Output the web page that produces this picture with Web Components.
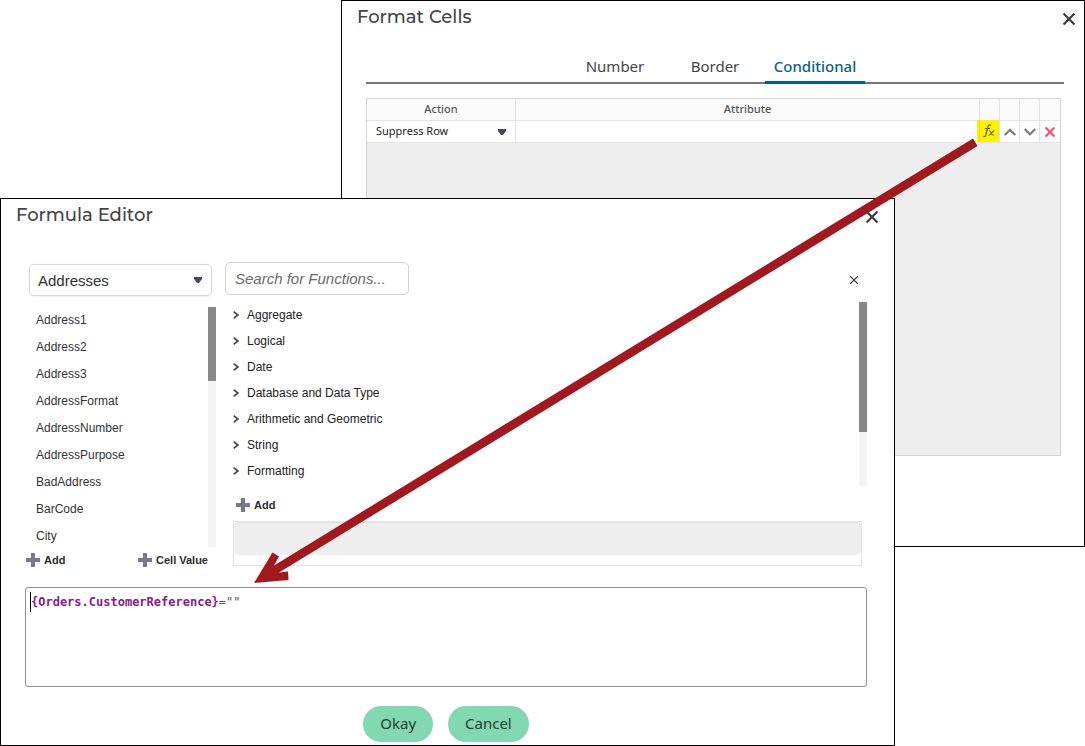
<!DOCTYPE html>
<html lang="en">
<head>
<meta charset="utf-8">
<title>Formula Editor</title>
<style>
html,body{margin:0;background:#fff}
body{font-family:"Liberation Sans",Arial,sans-serif;color:#333}
</style>
</head>
<body>
<app-desktop>
  <app-window slot="back" heading="Format Cells"><format-cells></format-cells></app-window>
  <app-window slot="front" heading="Formula Editor"><formula-editor></formula-editor></app-window>
</app-desktop>

<script>
function define(name, html, setup) {
  const template = document.createElement('template');
  template.innerHTML = html;
  customElements.define(name, class extends HTMLElement {
    constructor() {
      super();
      this.attachShadow({mode: 'open'}).append(template.content.cloneNode(true));
    }
    connectedCallback() { if (setup) setup(this, this.shadowRoot); }
  });
}

/* Two overlapping windows joined by a pointer arrow */
define('app-desktop', `
<style>
:host{display:grid;position:relative;grid-template-columns:341px minmax(0,1fr) 190px;grid-template-rows:198px auto}
::slotted([slot=back]){grid-area:1/2/3/4;align-self:start}
::slotted([slot=front]){grid-area:2/1/3/3;align-self:start}
svg{position:absolute;inset:0;width:100%;height:100%;pointer-events:none}
</style>
<slot name="back"></slot><slot name="front"></slot>
<svg viewBox="0 0 1085 746" preserveAspectRatio="none" aria-hidden="true">
<path d="M973 138.500L977.500 146L279 572.500L288 571.500L288.500 580L254 583L272.500 552.500L279 556.500L274 565.500Z" fill="#a1181f"/>
</svg>`);

define('app-window', `
<style>
:host{display:block;box-sizing:border-box;border:1px solid #000;background:#fff}
header{display:flex;align-items:center;justify-content:space-between;height:36px;padding:0 9px 0 15px}
h2{margin:0;align-self:flex-start;font:500 18px/32px Montserrat,Inter,sans-serif;color:#444}
button{display:flex;padding:0;border:0;background:none}
svg{width:12px;height:12px}
</style>
<header><h2></h2><button type="button" aria-label="Close"><svg viewBox="0 0 12 12"><path d="M.5 .5L11.500 11.500M11.500 .5L.5 11.500" stroke="#3c3c3c" stroke-width="2.200"/></svg></button></header>
<slot></slot>`, (el, root) => {
  root.querySelector('h2').textContent = el.getAttribute('heading');
  if (el.getAttribute('slot') === 'front') root.querySelector('header').style.paddingRight = '16px';
});

define('tab-item', `
<style>
:host{display:block;width:100px}
button{width:100%;height:33px;padding:0;border:0;border-bottom:3px solid transparent;background:none;font:400 15px/20px "Noto Sans",sans-serif;color:#444}
:host([selected]) button{font-weight:500;color:#0b5f7f;border-color:#00607f}
</style>
<button type="button" role="tab"><slot></slot></button>`, (el, root) => {
  root.querySelector('button').setAttribute('aria-selected', el.hasAttribute('selected'));
});

define('format-cells', `
<style>
:host{display:block;padding:14px 20px 90px 24px}
.tabs{display:flex;justify-content:center;background:linear-gradient(#777,#777) bottom/100% 2px no-repeat}
.grid{box-sizing:border-box;height:358px;margin:14px 3px 0 0;border:1px solid #d4d4d4;background:#eee}
table{width:100%;table-layout:fixed;border-collapse:separate;border-spacing:0;font:11px/20px "Noto Sans",sans-serif;background:#fff}
th,td{box-sizing:border-box;height:22px;padding:0;border-right:1px solid #e4e4e4;border-bottom:1px solid #e4e4e4}
th{padding-bottom:1px;line-height:18px;background:#fbfbfb;font-weight:500;color:#555}
th:last-child,td:last-child{border-right:0}
.action{width:149px}.tool{width:20px}
.pick{display:grid;align-items:center}
.pick>*{grid-area:1/1}
select{width:100%;height:20px;padding:0 9px 2px;border:0;appearance:none;background:none;font:11px/18px "Noto Sans",sans-serif;color:#222}
.pick svg{justify-self:end;margin-right:9px;width:8px;height:6px;pointer-events:none}
td button{display:flex;box-sizing:border-box;width:100%;height:21px;padding:0;border:0;background:none;align-items:center;justify-content:center}
button.fx{position:relative;width:22px;height:22px;margin:-1px 0 0 -3px;padding-left:2px;background:linear-gradient(#e8db00,#e8db00) 2px 0/1px 100% no-repeat #fff200}
.fx svg{width:12px;height:14px}
</style>
<div class="tabs" role="tablist"><tab-item>Number</tab-item><tab-item>Border</tab-item><tab-item selected>Conditional</tab-item></div>
<div class="grid"><table>
<colgroup><col class="action"><col><col class="tool"><col class="tool"><col class="tool"><col class="tool"></colgroup>
<thead><tr><th>Action</th><th>Attribute</th><th></th><th></th><th></th><th></th></tr></thead>
<tbody><tr>
<td><div class="pick"><select aria-label="Action"><option>Suppress Row</option></select><svg viewBox="0 0 8 6"><path d="M0 0H8V2L5 6H3L0 2Z" fill="#434a62"/></svg></div></td>
<td></td>
<td><button class="fx" type="button" aria-label="Edit formula"><svg viewBox="0 0 12 14" fill="none" stroke="#6c6917" stroke-linecap="round"><path d="M7.500 1.500C6.500 .4 5.300 1 4.800 3L3 10.500C2.500 12.500 1.600 13 .7 12.300M2.300 4.500H6.600" stroke-width="1.200"/><path d="M6.500 7C8.300 6.500 8 11.700 10.500 11M10.800 6.800L6 11.300" stroke-width="1.100"/></svg></button></td>
<td><button type="button" aria-label="Move up"><svg width="12" height="8" viewBox="0 0 12 8"><path d="M.7 7L6 1.700L11.300 7" fill="none" stroke="#737a8b" stroke-width="2.200"/></svg></button></td>
<td><button type="button" aria-label="Move down"><svg width="12" height="8" viewBox="0 0 12 8"><path d="M.7 1L6 6.300L11.300 1" fill="none" stroke="#737a8b" stroke-width="2.200"/></svg></button></td>
<td><button type="button" aria-label="Delete"><svg width="10" height="10" viewBox="0 0 10 10"><path d="M.5 .5L9.500 9.500M9.500 .5L.5 9.500" stroke="#f4526c" stroke-width="2.200"/></svg></button></td>
</tr></tbody></table></div>`);

define('scroll-pane', `
<style>
:host{display:flex;height:var(--height);overflow:hidden}
.content{flex:1;min-width:0}
.bar{width:8px;background:#f4f4f4}
.thumb{height:var(--thumb);background:#888}
</style>
<div class="content"><slot></slot></div><div class="bar"><div class="thumb"></div></div>`);

define('add-button', `
<style>
:host{display:block}
button{display:flex;align-items:center;gap:4px;padding:0;border:0;background:none;font:700 11px/16px "Liberation Sans",Arial,sans-serif;color:#2b2b2b}
svg{width:14px;height:14px}
</style>
<button type="button"><svg viewBox="0 0 14 14" aria-hidden="true"><path d="M5 0H9V5H14V9H9V14H5V9H0V5H5Z" fill="#757b8c"/></svg><slot></slot></button>`);

define('function-group', `
<style>
:host{display:block}
button{display:flex;align-items:center;gap:8px;height:26px;padding:0 0 0 8px;border:0;background:none;font:12px/16px "Liberation Sans",Arial,sans-serif;color:#222}
svg{width:6px;height:8px}
</style>
<button type="button" aria-expanded="false"><svg viewBox="0 0 6 8" aria-hidden="true"><path d="M.7 .7L4.800 4L.7 7.300" fill="none" stroke="#434a62" stroke-width="1.700"/></svg><slot></slot></button>`);

define('pill-button', `
<style>
:host{display:block}
button{height:36px;padding:0 17px 2px;border:0;border-radius:18px;background:#82d9b1;font:400 15px/20px "Noto Sans",sans-serif;color:#263b32}
</style>
<button type="button"><slot></slot></button>`);

define('formula-editor', `
<style>
:host{display:block;padding:27px 27px 3px 24px}
.columns{display:grid;grid-template-columns:191px minmax(0,1fr);gap:9px}
.pick{display:grid;align-items:center;margin:2px 4px 11px}
.pick>*{grid-area:1/1}
select{box-sizing:border-box;width:100%;height:32px;padding:2px 8px 0;appearance:none;border:1px solid #d8d8d8;border-radius:5px;background:#fff;box-shadow:0 1px 3px #0001;font:15px/20px "Liberation Sans",Arial,sans-serif;color:#333}
.pick svg{justify-self:end;margin-right:10px;width:8px;height:6px;pointer-events:none}
.fields{--height:240px;--thumb:74px}
ul{list-style:none;margin:0;padding:0 0 0 11px;font-size:12px;line-height:27px;color:#333}
.actions{display:flex;justify-content:space-between;align-items:center;height:26px;padding:0 8px 0 1px}
.search{display:flex;justify-content:space-between;align-items:center;padding-right:9px;margin-bottom:7px}
input{box-sizing:border-box;width:184px;height:33px;padding:0 9px;border:1px solid #d0d0d0;border-radius:5px;font:italic 15px/20px "Liberation Sans",Arial,sans-serif}
input::placeholder{color:#6b6b6b;opacity:1}
.search button{display:flex;padding:2px 0 0;border:0;background:none}
.functions{--height:184px;--thumb:130px}
.add{padding:11px 0 8px 11px}
.help{box-sizing:border-box;height:45px;margin:0 5px 0 8px;border:1px solid #e4e4e4}
.help div{height:33px;border-radius:5px;background:#eee;box-shadow:inset 0 1px #e0e0e0}
.code{box-sizing:border-box;height:100px;margin-top:14px;padding:4px;border:1px solid #8f8f8f;border-radius:3px;font:12px/20px "DejaVu Sans Mono",monospace;color:#555;outline:0}
.code span{font-weight:700;color:#891a8b}
.caret{display:inline-block;vertical-align:top;width:1px;height:20px;background:#000}
footer{display:flex;justify-content:center;gap:15px;margin-top:19px}
</style>
<div class="columns">
<div>
<div class="pick"><select aria-label="Table"><option>Addresses</option></select><svg viewBox="0 0 8 6"><path d="M0 0H8V2L5 6H3L0 2Z" fill="#434a62"/></svg></div>
<scroll-pane class="fields"><ul><li>Address1</li><li>Address2</li><li>Address3</li><li>AddressFormat</li><li>AddressNumber</li><li>AddressPurpose</li><li>BadAddress</li><li>BarCode</li><li>City</li></ul></scroll-pane>
<div class="actions"><add-button>Add</add-button><add-button>Cell Value</add-button></div>
</div>
<div>
<div class="search"><input type="text" placeholder="Search for Functions..." aria-label="Search for Functions"><button type="button" aria-label="Clear"><svg width="8" height="8" viewBox="0 0 8 8"><path d="M0 0L8 8M8 0L0 8" stroke="#333" stroke-width="1.200"/></svg></button></div>
<scroll-pane class="functions"><function-group>Aggregate</function-group><function-group>Logical</function-group><function-group>Date</function-group><function-group>Database and Data Type</function-group><function-group>Arithmetic and Geometric</function-group><function-group>String</function-group><function-group>Formatting</function-group></scroll-pane>
<div class="add"><add-button>Add</add-button></div>
<div class="help"><div></div></div>
</div>
</div>
<div class="code" contenteditable="true" spellcheck="false" role="textbox" aria-multiline="true" aria-label="Formula"><i class="caret"></i><span>{Orders.CustomerReference}</span>=""</div>
<footer><pill-button>Okay</pill-button><pill-button>Cancel</pill-button></footer>`);
</script>
</body>
</html>
